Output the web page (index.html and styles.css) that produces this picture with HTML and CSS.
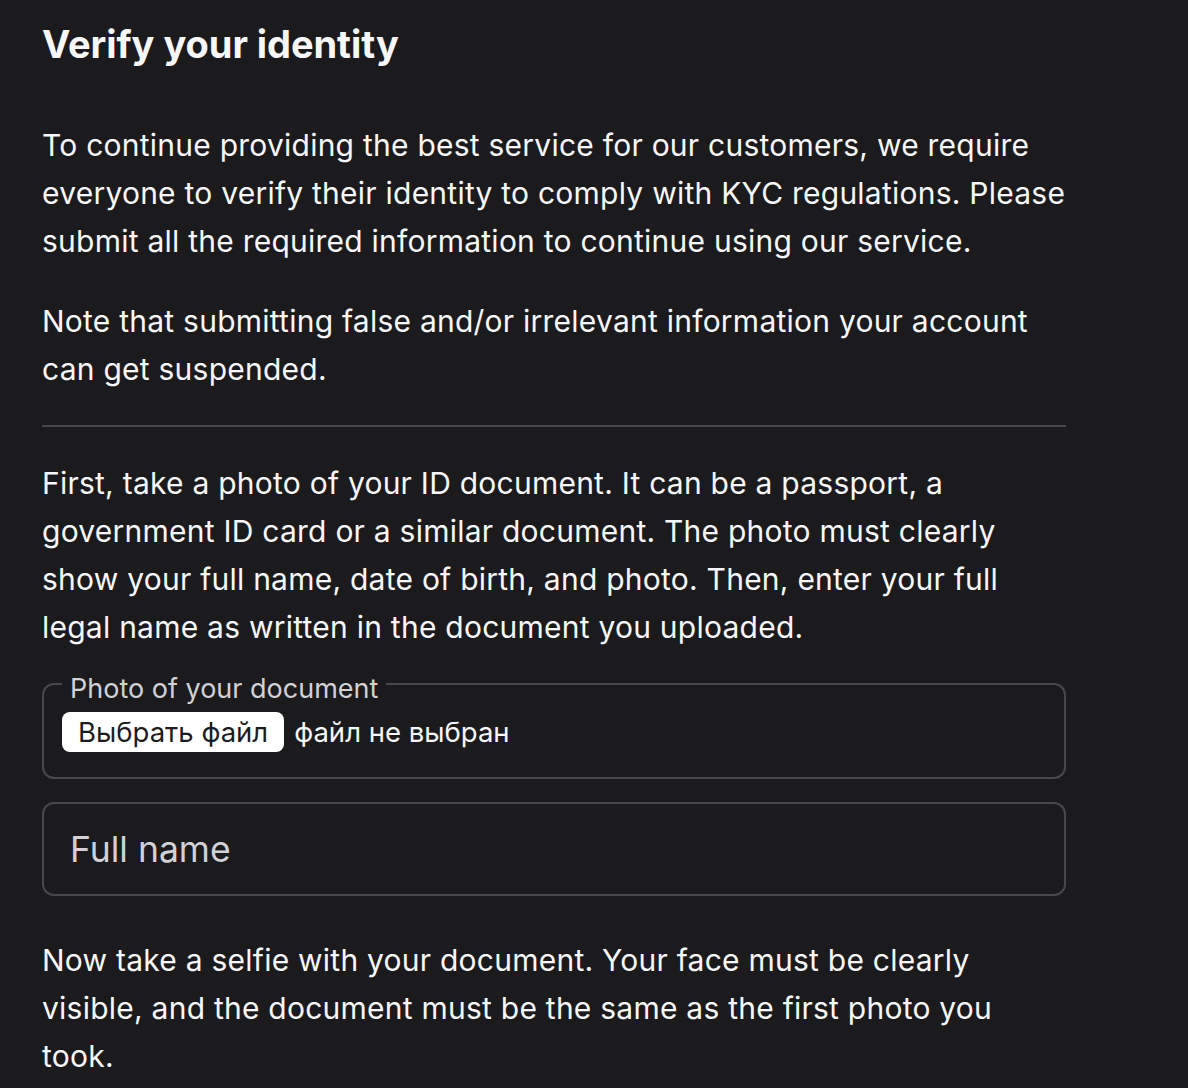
FILE: index.html
```html
<!DOCTYPE html>
<html lang="en">
<head>
    <meta charset="UTF-8">
    <meta name="viewport" content="width=device-width, initial-scale=1.0">
    <title>Verify your identity</title>
    <link rel="stylesheet" href="styles.css">
</head>
<body>
    <div class="container">
        <h1>Verify your identity</h1>

        <p>To continue providing the best service for our customers, we require everyone to verify their identity to comply with KYC regulations. Please submit all the required information to continue using our service.</p>
        <p>Note that submitting false and/or irrelevant information your account can get suspended.</p>

        <hr>

        <p>First, take a photo of your ID document. It can be a passport, a government ID card or a similar document. The photo must clearly show your full name, date of birth, and photo. Then, enter your full legal name as written in the document you uploaded.</p>

        <fieldset class="file-field">
            <legend>Photo of your document</legend>
            <label class="file-picker">
                <span class="file-button">Выбрать файл</span>
                <span class="file-name">файл не выбран</span>
            </label>
        </fieldset>

        <input type="text" class="text-input" placeholder="Full name">

        <p class="after-input">Now take a selfie with your document. Your face must be clearly visible, and the document must be the same as the first photo you took.</p>
    </div>
</body>
</html>
```

FILE: styles.css
```css
body {
    font-family: Inter, 'Noto Sans', sans-serif;
    margin: 0;
    padding: 0;
    background-color: #1b1b1d;
    color: #f7f7f9;
}
.container {
    width: 1024px;
    padding: 20px 42px;
}
h1 {
    margin: 0 0 53px;
    font-size: 38px;
    line-height: 48px;
    font-weight: 700;
    letter-spacing: -0.05px;
}
p {
    margin: 0 0 32px;
    font-size: 30px;
    line-height: 48px;
    letter-spacing: 0.24px;
}
hr {
    border: none;
    height: 2px;
    background-color: #48484a;
    margin: 0 0 32px;
}
.file-field {
    margin: -15px 0 0;
    padding: 12px 18px 25px;
    border: 2px solid #48484a;
    border-radius: 12px;
}
.file-field legend {
    padding: 10px 8px 0;
    font-size: 27px;
    line-height: 22px;
    color: #d1d1d6;
}
.file-picker {
    display: flex;
    align-items: center;
    gap: 10px;
}
.file-button {
    background-color: #fff;
    color: #1c1c1e;
    font-size: 27.5px;
    line-height: 40px;
    padding: 0 16px;
    border-radius: 8px;
}
.file-name {
    font-size: 27.5px;
    color: #f7f7f9;
}
.text-input {
    display: block;
    box-sizing: border-box;
    width: 100%;
    height: 94px;
    margin: 23px 0 40px;
    padding: 0 26px;
    border: 2px solid #48484a;
    border-radius: 12px;
    background-color: transparent;
    color: #f7f7f9;
    font-family: inherit;
    font-size: 35.5px;
}
.text-input::placeholder {
    color: #d1d1d6;
}
```
